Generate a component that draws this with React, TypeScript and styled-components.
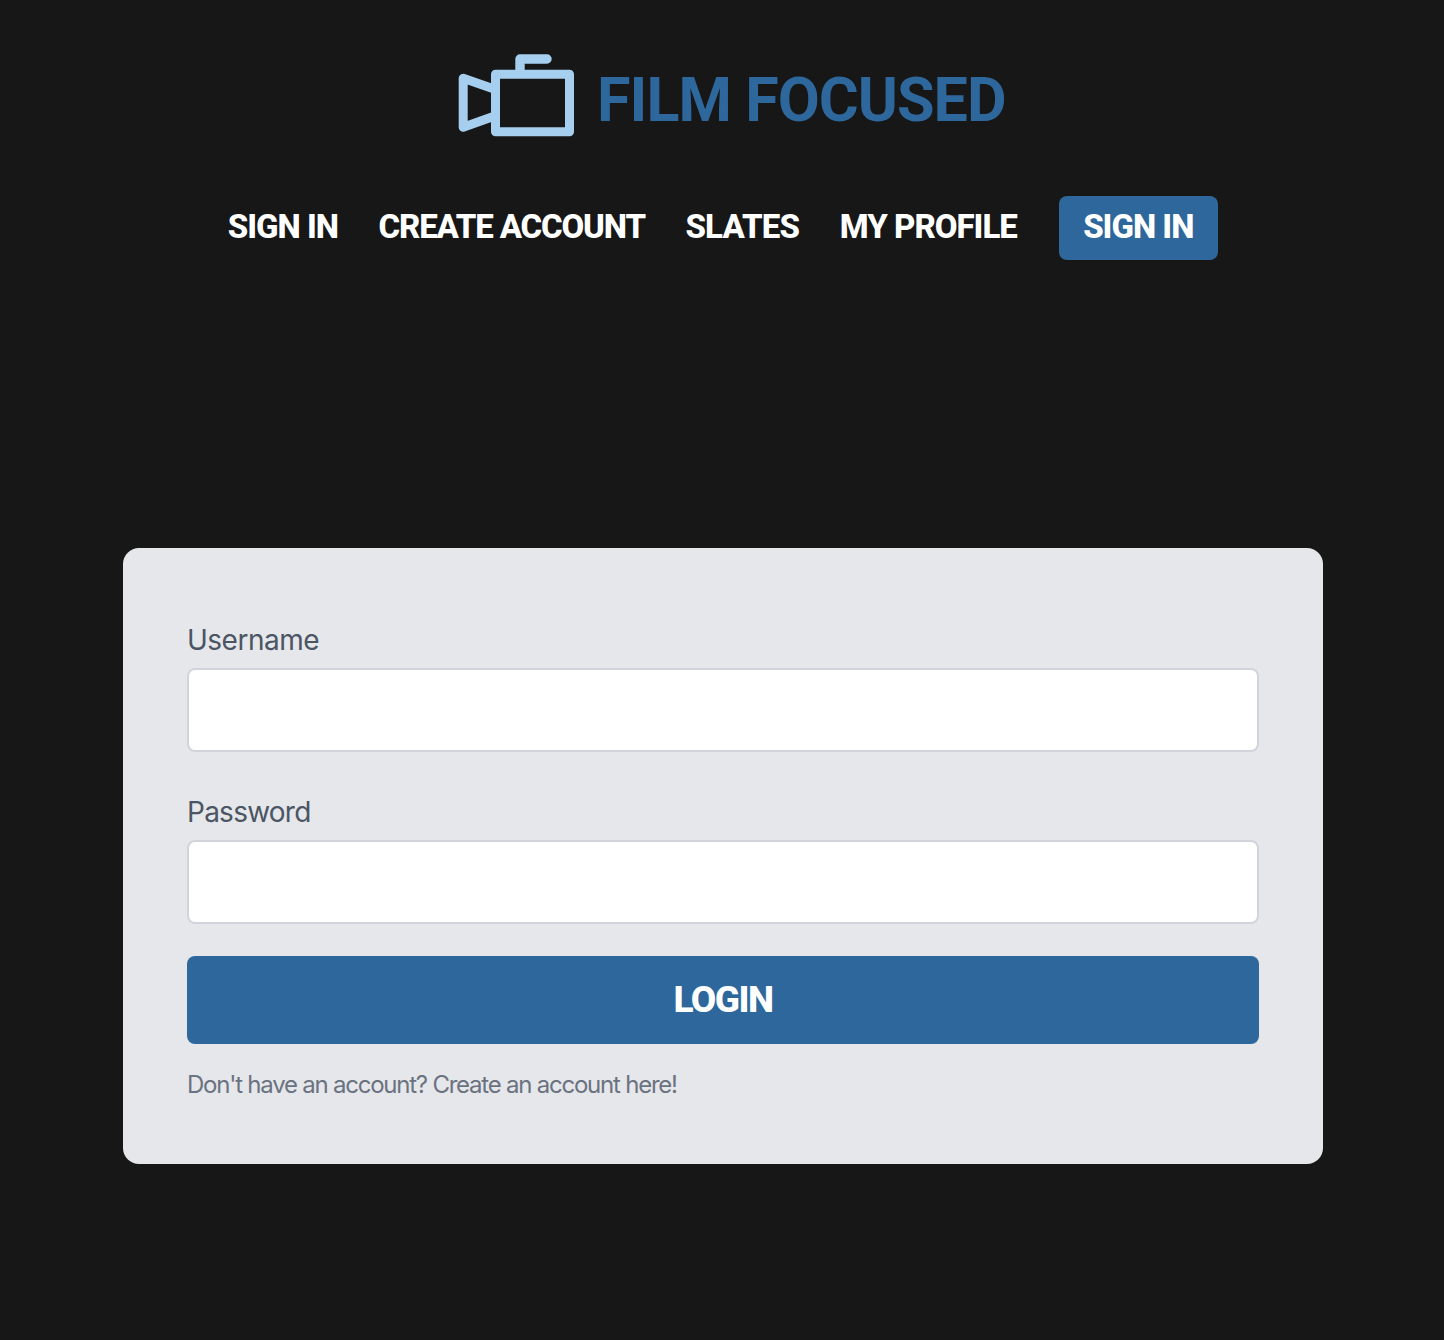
import React, { useState } from 'react';
import styled, { createGlobalStyle } from 'styled-components';

interface NavItem {
  label: string;
  tracking: number;
}

const navItems: NavItem[] = [
  { label: 'Sign In', tracking: -1 },
  { label: 'Create Account', tracking: -1.15 },
  { label: 'Slates', tracking: -0.8 },
  { label: 'My Profile', tracking: -1 },
];

const GlobalStyle = createGlobalStyle`
  *,
  *::before,
  *::after {
    box-sizing: border-box;
  }
  body {
    margin: 0;
    background: #171717;
    font-family: Inter, 'Liberation Sans', sans-serif;
  }
`;

const Page = styled.div`
  min-height: 1340px;
  background: #171717;
`;

const Header = styled.header`
  display: flex;
  flex-direction: column;
  align-items: center;
  padding-top: 52px;
`;

const Brand = styled.div`
  display: flex;
  align-items: center;
  height: 86px;
  width: 548px;
  margin-left: 18px;
`;

const CameraIcon = styled.svg`
  flex: none;
  width: 120px;
  height: 86px;
`;

const BrandName = styled.h1`
  margin: 9px 0 0 20px;
  font-family: Roboto, sans-serif;
  font-size: 61px;
  font-weight: 700;
  line-height: 72px;
  letter-spacing: -0.95px;
  color: #2d679c;
  text-transform: uppercase;
  white-space: nowrap;
`;

const Nav = styled.nav`
  display: flex;
  align-items: flex-start;
  gap: 40.5px;
  margin: 58px 0 0 2px;
`;

const NavLink = styled.a<{ $tracking: number }>`
  font-family: Roboto, sans-serif;
  font-size: 33px;
  font-weight: 800;
  line-height: 62px;
  letter-spacing: ${({ $tracking }) => $tracking}px;
  color: #fff;
  text-decoration: none;
  text-transform: uppercase;
  white-space: nowrap;
`;

const NavButton = styled(NavLink)`
  width: 159px;
  height: 64px;
  margin-left: 2px;
  padding-right: 1px;
  border-radius: 8px;
  background: #2d679c;
  text-align: center;
`;

const LoginForm = styled.form`
  display: flex;
  flex-direction: column;
  width: 1200px;
  height: 616px;
  margin: 288px 0 0 123px;
  padding: 64px 64px 60px;
  border-radius: 16px;
  background: #e5e7eb;
`;

const Field = styled.label<{ $tracking: number }>`
  display: block;
  margin-bottom: 32px;
  letter-spacing: ${({ $tracking }) => $tracking}px;
`;

const FieldLabel = styled.span`
  display: block;
  padding-top: 8px;
  font-size: 28px;
  line-height: 40px;
  color: #4b5563;
`;

const Input = styled.input`
  display: block;
  width: 100%;
  height: 84px;
  margin-top: 8px;
  padding: 16px;
  border: 2px solid #d1d5db;
  border-radius: 8px;
  outline: none;
  background: #fff;
  font-size: 32px;
`;

const LoginButton = styled.button`
  flex: none;
  width: 100%;
  height: 88px;
  padding: 0 0 2px;
  border: none;
  border-radius: 8px;
  background: #2d679c;
  font-family: Roboto, sans-serif;
  font-size: 37px;
  font-weight: 800;
  letter-spacing: -1.5px;
  color: #fff;
  text-transform: uppercase;
  cursor: pointer;
`;

const SignUpLink = styled.a`
  margin-top: 25px;
  font-size: 24px;
  line-height: 32px;
  letter-spacing: -1.23px;
  color: #6b7280;
`;

const App: React.FC = () => {
  const [username, setUsername] = useState('');
  const [password, setPassword] = useState('');

  return (
    <Page>
      <GlobalStyle />
      <Header>
        <Brand>
          <CameraIcon viewBox='0 0 120 86' fill='none' stroke='#a6cfef' strokeLinejoin='round' strokeLinecap='round'>
            <rect x='38.5' y='22.3' width='74' height='57.5' strokeWidth='9' />
            <path d='M37 37 L6.2 26.2 V75.2 L37 64.2' strokeWidth='9' />
            <path d='M63 21 V7 H90' strokeWidth='9.4' />
          </CameraIcon>
          <BrandName>Film Focused</BrandName>
        </Brand>
        <Nav>
          {navItems.map((item) => (
            <NavLink key={item.label} $tracking={item.tracking}>
              {item.label}
            </NavLink>
          ))}
          <NavButton $tracking={-1}>Sign In</NavButton>
        </Nav>
      </Header>
      <LoginForm onSubmit={(e) => e.preventDefault()}>
        <Field $tracking={-0.5}>
          <FieldLabel>Username</FieldLabel>
          <Input type='text' value={username} onChange={(e) => setUsername(e.target.value)} />
        </Field>
        <Field $tracking={-0.75}>
          <FieldLabel>Password</FieldLabel>
          <Input type='password' value={password} onChange={(e) => setPassword(e.target.value)} />
        </Field>
        <LoginButton type='submit'>Login</LoginButton>
        <SignUpLink>Don't have an account? Create an account here!</SignUpLink>
      </LoginForm>
    </Page>
  );
};

export default App;
